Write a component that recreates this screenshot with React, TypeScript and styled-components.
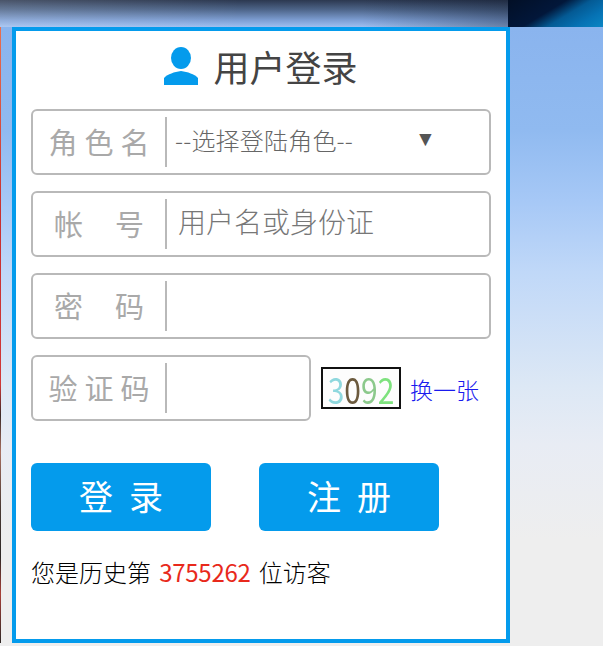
import React from 'react';
import styled, { createGlobalStyle } from 'styled-components';

const GlobalStyle = createGlobalStyle`
  html, body {
    margin: 0;
    padding: 0;
    height: 646px;
    overflow: hidden;
  }
  body {
    font-family: "Noto Sans CJK SC", "Liberation Sans", sans-serif;
    background: linear-gradient(180deg, #8ab4ee 27px, #90baf0 130px, #a6c8f6 200px, #c0d8f8 272px, #dde8f5 387px, #e8ecf4 445px, #eeeeee 540px);
  }
`;

const Page = styled.div`
  width: 603px;
  height: 646px;
  display: flex;
  flex-direction: column;
`;

const TopBanner = styled.div`
  height: 27px;
  flex: none;
  display: flex;
  background:
    linear-gradient(90deg, rgba(255, 255, 255, 0.14) 0%, rgba(255, 255, 255, 0) 40%, rgba(0, 0, 0, 0) 60%, rgba(10, 20, 40, 0.35) 84%),
    linear-gradient(180deg, #2c3850 0%, #4d6488 35%, #7e9fd4 75%, #9fbff0 100%);
`;

const BannerFill = styled.div`
  flex: 1;
`;

const BannerCorner = styled.div`
  width: 95px;
  flex: none;
  background: linear-gradient(149deg, #020f26 0%, #02173a 42%, #045a94 60%, #0672b4 80%, #0a86c4 100%);
`;

const Body = styled.div`
  flex: 1;
  display: flex;
  min-height: 0;
`;

const LeftStrip = styled.div`
  width: 12px;
  flex: none;
  height: 616px;
  display: flex;
`;

const RedEdge = styled.div`
  width: 1px;
  background: linear-gradient(180deg, #e87050 0%, #c83030 30%, #d03838 58%, #3a2a28 63%, #a87060 69%, #4a3a34 78%, #2e2826 86%, #a84038 92%, #2e2826 100%);
`;

const Panel = styled.div`
  box-sizing: border-box;
  width: 498px;
  height: 616px;
  flex: none;
  background: #fff;
  border: 4px solid #049bec;
  padding: 0 15px;
`;

const Title = styled.div`
  display: flex;
  align-items: center;
  justify-content: center;
  gap: 15px;
  height: 78px;
  padding-bottom: 9px;
  box-sizing: border-box;
  font-size: 36px;
  color: #444;
`;

const TitleIcon = styled.svg`
  width: 34px;
  height: 38px;
  flex: none;
  margin-top: 1px;
`;

const Field = styled.div<{ $width?: number }>`
  box-sizing: border-box;
  width: ${(p) => p.$width ?? 460}px;
  height: 66px;
  border: 2px solid #b9b9b9;
  border-radius: 6px;
  display: flex;
  align-items: center;
`;

const FieldRow = styled.div`
  display: flex;
  align-items: center;
  margin-bottom: 16px;
`;

const Label = styled.div`
  box-sizing: border-box;
  width: 134px;
  height: 50px;
  flex: none;
  border-right: 2px solid #b9b9b9;
  display: flex;
  align-items: center;
  justify-content: center;
  font-size: 29px;
  color: #a9a9a9;
  padding-bottom: 2px;
`;

const Spaced = styled.span<{ $gap: number }>`
  display: flex;
  gap: ${(p) => p.$gap}px;
`;

const SelectText = styled.div`
  flex: 1;
  padding: 0 0 6px 8px;
  display: flex;
  align-items: center;
  font-size: 24px;
  font-weight: 300;
  letter-spacing: 0.2px;
  color: #666;
`;

const Arrow = styled.span`
  margin-left: auto;
  margin-right: 53px;
  font-size: 21px;
  color: #555;
  font-family: "DejaVu Sans", sans-serif;
`;

const Placeholder = styled.div`
  padding: 0 0 6px 11px;
  font-size: 28px;
  font-weight: 300;
  color: #777;
`;

const Captcha = styled.div`
  box-sizing: border-box;
  width: 80px;
  height: 42px;
  margin-left: 10px;
  border: 2px solid #111;
  background: #fdfdfd;
  display: flex;
  align-items: center;
  justify-content: center;
`;

const CaptchaDigits = styled.span`
  display: block;
  font-size: 30px;
  line-height: 1;
  white-space: nowrap;
  transform: scaleY(1.2);
  filter: blur(0.4px);
`;

const Digit = styled.span<{ $color: string }>`
  color: ${(p) => p.$color};
`;

const ChangeLink = styled.a`
  margin-left: 9px;
  margin-top: 2px;
  font-size: 23px;
  font-weight: 300;
  color: #1a1aee;
  cursor: pointer;
`;

const Buttons = styled.div`
  display: flex;
  gap: 48px;
  margin-top: 42px;
`;

const Button = styled.button`
  width: 180px;
  height: 68px;
  border: none;
  border-radius: 6px;
  background: #049bec;
  color: #fff;
  font-family: inherit;
  font-size: 34px;
  letter-spacing: 16px;
  padding: 0 0 4px 16px;
  cursor: pointer;
`;

const Visitors = styled.div`
  margin-top: 23px;
  font-size: 24px;
  font-weight: 300;
  line-height: 36px;
  color: #000;
`;

const Count = styled.span`
  color: #e8291c;
  font-weight: 400;
  margin: 0 3px;
  letter-spacing: -0.3px;
`;

const App = () => {
  return (
    <Page>
      <GlobalStyle />
      <TopBanner>
        <BannerFill />
        <BannerCorner />
      </TopBanner>
      <Body>
        <LeftStrip>
          <RedEdge />
        </LeftStrip>
        <Panel>
          <Title>
            <TitleIcon viewBox="0 0 34 38">
              <ellipse cx="17" cy="11" rx="10" ry="11" fill="#049bec" />
              <path d="M0 38V31C4 27 10 25 17 24C24 25 30 27 34 31V38Z" fill="#049bec" />
            </TitleIcon>
            用户登录
          </Title>
          <FieldRow>
            <Field>
              <Label><Spaced $gap={7}><span>角</span><span>色</span><span>名</span></Spaced></Label>
              <SelectText>--选择登陆角色--<Arrow>▼</Arrow></SelectText>
            </Field>
          </FieldRow>
          <FieldRow>
            <Field>
              <Label><Spaced $gap={32}><span>帐</span><span>号</span></Spaced></Label>
              <Placeholder>用户名或身份证</Placeholder>
            </Field>
          </FieldRow>
          <FieldRow>
            <Field>
              <Label><Spaced $gap={32}><span>密</span><span>码</span></Spaced></Label>
            </Field>
          </FieldRow>
          <FieldRow>
            <Field $width={280}>
              <Label><Spaced $gap={7}><span>验</span><span>证</span><span>码</span></Spaced></Label>
            </Field>
            <Captcha>
              <CaptchaDigits>
                <Digit $color="#8fd8de">3</Digit>
                <Digit $color="#6b5a3e">0</Digit>
                <Digit $color="#8cc98c">9</Digit>
                <Digit $color="#7ee27e">2</Digit>
              </CaptchaDigits>
            </Captcha>
            <ChangeLink>换一张</ChangeLink>
          </FieldRow>
          <Buttons>
            <Button>登录</Button>
            <Button>注册</Button>
          </Buttons>
          <Visitors>您是历史第 <Count>3755262</Count> 位访客</Visitors>
        </Panel>
      </Body>
    </Page>
  );
};

export default App;
